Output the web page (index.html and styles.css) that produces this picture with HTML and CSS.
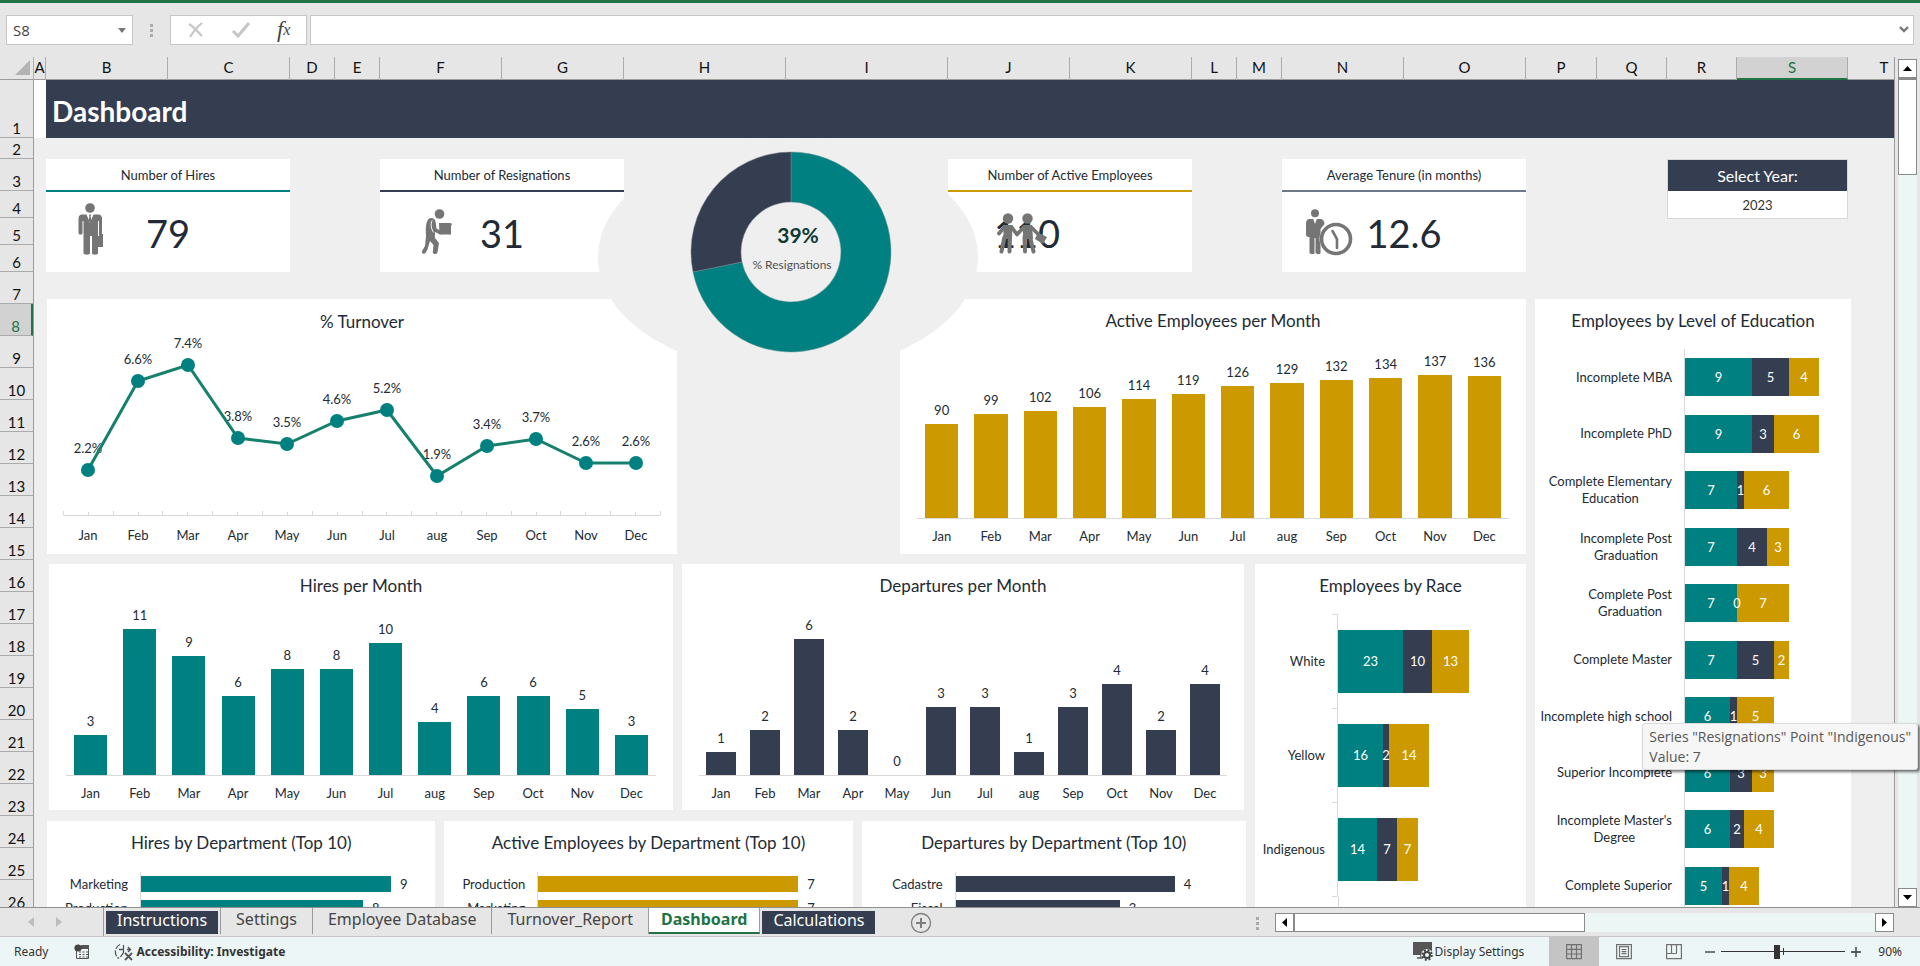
FILE: index.html
```html
<!DOCTYPE html>
<html lang="en">
<head>
<meta charset="utf-8">
<title>Dashboard</title>
<link rel="stylesheet" href="styles.css">
</head>
<body>
<header class="formula">
  <div class="namebox">
    <input type="text" value="S8" aria-label="Name box">
    <button type="button" aria-label="Open name list"><svg width="8" height="5" viewBox="0 0 8 5"><path d="M0 0h8L4 5z" fill="#777"/></svg></button>
  </div>
  <span class="grip"></span>
  <div class="fx">
    <button type="button" aria-label="Cancel"><svg width="18" height="18" viewBox="0 0 18 18"><path d="M2 3c5 3 9 8 13 12M15 2C10 6 6 11 3 16" fill="none" stroke="#c6c6c6" stroke-width="2.2"/></svg></button>
    <button type="button" aria-label="Enter"><svg width="18" height="18" viewBox="0 0 18 18"><path d="M1 10l5 5L17 2" fill="none" stroke="#c6c6c6" stroke-width="3"/></svg></button>
    <button type="button" class="fn" aria-label="Insert function">f<sub>x</sub></button>
  </div>
  <div class="entry">
    <input type="text" aria-label="Formula bar">
    <button type="button" aria-label="Expand formula bar"><svg width="10" height="8" viewBox="0 0 10 8"><path d="M1 1l4 4 4-4" fill="none" stroke="#777" stroke-width="2.4"/></svg></button>
  </div>
</header>

<main class="workbook">
  <div class="corner"><svg width="15" height="15" viewBox="0 0 15 15"><path d="M15 0v15H0z" fill="#b4b4b4"/></svg></div>
  <div class="cols"><span>A</span><span>B</span><span>C</span><span>D</span><span>E</span><span>F</span><span>G</span><span>H</span><span>I</span><span>J</span><span>K</span><span>L</span><span>M</span><span>N</span><span>O</span><span>P</span><span>Q</span><span>R</span><span class="on">S</span><span class="last">T</span></div>
  <div class="vscroll">
    <button type="button" aria-label="Scroll up"><svg width="9" height="5" viewBox="0 0 9 5"><path d="M0 5L4.500 0 9 5z"/></svg></button>
    <div class="vtrack"><div class="vthumb"></div></div>
    <button type="button" aria-label="Scroll down"><svg width="9" height="5" viewBox="0 0 9 5"><path d="M0 0L4.500 5 9 0z"/></svg></button>
  </div>
  <div class="rows"><span>1</span><span>2</span><span>3</span><span>4</span><span>5</span><span>6</span><span>7</span><span class="on">8</span><span>9</span><span>10</span><span>11</span><span>12</span><span>13</span><span>14</span><span>15</span><span>16</span><span>17</span><span>18</span><span>19</span><span>20</span><span>21</span><span>22</span><span>23</span><span>24</span><span>25</span><span>26</span></div>

  <div class="sheet">
    <div class="band"><h1>Dashboard</h1></div>

    <div class="kpis">
      <section class="kpi k1">
        <h2>Number of Hires</h2>
        <div class="body">
          <svg class="ic" width="26" height="52" viewBox="0 0 26 52" fill="#757575"><circle cx="12" cy="5" r="4.800"/><path d="M4 11.500h4.500L12 20l3.500-8.500H20c2.500 0 4 1.500 4 4V31h1v13h-5V33h1V18h-1v32.500c0 1.500-6 1.500-6 0V33h-2v17.500c0 1.500-6.500 1.500-6.500 0V18h-1v12c0 2-4 2-4 0V15.500c0-2.500 1.500-4 3.500-4z"/><path d="M11 11.500h2l-.4 2 .9 4L12 20l-1.500-2.500.9-4z"/></svg>
          <strong>79</strong>
        </div>
      </section>
      <section class="kpi k2">
        <h2>Number of Resignations</h2>
        <div class="body">
          <svg class="ic" width="30" height="46" viewBox="0 0 30 46" fill="#757575"><circle cx="17.500" cy="5" r="4.800"/><path d="M17 14h11.500l1.500 1-1 2v8.500H17.500z"/><path d="M7 9.500c3-1.500 6 0 6.500 3l1 7 4.500 2.500c2 1.500.8 4-1.500 3.200L13 23c0 3-.4 4.500 0 6l4 5-1.500 9.500c-.8 2.500-5 2-4.700-.8L11.500 36 8 32 5.500 40.500 3.500 44C1.500 46-1 44 .3 41.500L3 37l1-10c-.5-7-.3-14.500 3-17.500z"/><path d="M10.200 11.500c-2 3-1 9 1.500 12" fill="none" stroke="#fff" stroke-width="1"/></svg>
          <strong>31</strong>
        </div>
      </section>
      <div class="ring">
        <svg width="380" height="232" viewBox="0 0 380 232">
          <ellipse cx="190" cy="116" rx="190" ry="116" fill="#efefef"/>
          <path d="M193 11A100 100 0 1 1 95 131L144 121A50 50 0 1 0 193 61z" fill="#008080" stroke="#60908f" stroke-width=".5"/>
          <path d="M193 11A100 100 0 0 0 95 131L144 121A50 50 0 0 1 193 61z" fill="#343e50" stroke="#7a8593" stroke-width=".5"/>
          <text class="pct" x="200" y="102">39%</text>
          <text class="cap" x="194" y="128">% Resignations</text>
        </svg>
      </div>
      <section class="kpi k3">
        <h2>Number of Active Employees</h2>
        <div class="body">
          <strong>110</strong>
          <svg class="ic" width="52" height="42" viewBox="0 0 52 42" fill="#757575"><circle cx="12" cy="5.500" r="5.200"/><circle cx="31.500" cy="5.500" r="5.200"/><g fill="none" stroke="#757575" stroke-linecap="round" stroke-linejoin="round"><path d="M8.500 14L3 20.500M15.500 14l5.500 7.500 7-7.500M35 14l8 8" stroke-width="3.800"/><path d="M8.500 24L5.500 38.500M14 24l-.5 14.500M28.500 24l.5 14.500M34 24l3.500 14.500" stroke-width="4"/></g><path d="M7.500 12h9l-.5 14H7.500zM27 12h9l1 14H27z"/><path d="M42 19.500l9 4.500-4 7-8-5z"/></svg>
        </div>
      </section>
      <section class="kpi k4">
        <h2>Average Tenure (in months)</h2>
        <div class="body">
          <svg class="ic" width="47" height="47" viewBox="0 0 47 47" fill="#757575"><circle cx="9" cy="4.300" r="4"/><path d="M3.500 10h3.700l1.800 5 1.800-5h3.700c2.500 0 4 2.500 4 5l-4 5v24c0 1.600-5 1.600-5 0V29h-1v15c0 1.600-5 1.600-5 0V28H2.500C1 28 0 27 0 25.500V15c0-3 1-5 3.500-5z"/><circle cx="30" cy="30" r="16.500" fill="#fff"/><circle cx="30" cy="30" r="14.500" fill="none" stroke="#757575" stroke-width="3.600"/><path d="M26.500 22l4.500 8v9" fill="none" stroke="#757575" stroke-width="2.600" stroke-linecap="round"/></svg>
          <strong>12.6</strong>
        </div>
      </section>
      <div class="year">
        <label for="year">Select Year:</label>
        <select id="year"><option>2023</option></select>
      </div>
    </div>

    <div class="charts">
      <div class="left">
        <div class="top">
          <section class="panel turnover">
            <svg viewBox="0 0 630 255" role="img" aria-label="Turnover by month">
              <text class="ttl" x="315" y="29">% Turnover</text>
              <path d="M16.500 216.500h597M16.500 212v4M41.500 213v3M66.500 212v4M91.500 213v3M115.500 212v4M140.500 213v3M165.500 212v4M190.500 213v3M215.500 212v4M240.500 213v3M265.500 212v4M290.500 213v3M315.500 212v4M339.500 213v3M364.500 212v4M389.500 213v3M414.500 212v4M439.500 213v3M464.500 212v4M489.500 213v3M513.500 212v4M538.500 213v3M563.500 212v4M588.500 213v3M613.500 212v4" fill="none" stroke="#d9d9d9"/>
              <g class="lbl">
                <text x="41" y="154">2.2%</text><text x="91" y="65">6.6%</text><text x="141" y="49">7.4%</text><text x="191" y="122">3.8%</text><text x="240" y="128">3.5%</text><text x="290" y="105">4.6%</text><text x="340" y="94">5.2%</text><text x="390" y="160">1.9%</text><text x="440" y="130">3.4%</text><text x="489" y="123">3.7%</text><text x="539" y="147">2.6%</text><text x="589" y="147">2.6%</text>
              </g>
              <polyline points="41,171 91,82 141,66 191,139 240,145 290,122 340,111 390,177 440,147 489,140 539,164 589,164" fill="none" stroke="#15806c" stroke-width="3"/>
              <g fill="#008080"><circle cx="41" cy="171" r="7"/><circle cx="91" cy="82" r="7"/><circle cx="141" cy="66" r="7"/><circle cx="191" cy="139" r="7"/><circle cx="240" cy="145" r="7"/><circle cx="290" cy="122" r="7"/><circle cx="340" cy="111" r="7"/><circle cx="390" cy="177" r="7"/><circle cx="440" cy="147" r="7"/><circle cx="489" cy="140" r="7"/><circle cx="539" cy="164" r="7"/><circle cx="589" cy="164" r="7"/></g>
              <g class="lbl">
                <text x="41" y="241">Jan</text><text x="91" y="241">Feb</text><text x="141" y="241">Mar</text><text x="191" y="241">Apr</text><text x="240" y="241">May</text><text x="290" y="241">Jun</text><text x="340" y="241">Jul</text><text x="390" y="241">aug</text><text x="440" y="241">Sep</text><text x="489" y="241">Oct</text><text x="539" y="241">Nov</text><text x="589" y="241">Dec</text>
              </g>
            </svg>
          </section>
          <div></div>
          <section class="panel active">
            <h3>Active Employees per Month</h3>
            <ul class="bars">
              <li style="height:94px"><span>90</span><i></i></li><li style="height:104px"><span>99</span><i></i></li><li style="height:107px"><span>102</span><i></i></li><li style="height:111px"><span>106</span><i></i></li><li style="height:119px"><span>114</span><i></i></li><li style="height:124px"><span>119</span><i></i></li><li style="height:132px"><span>126</span><i></i></li><li style="height:135px"><span>129</span><i></i></li><li style="height:138px"><span>132</span><i></i></li><li style="height:140px"><span>134</span><i></i></li><li style="height:143px"><span>137</span><i></i></li><li style="height:142px"><span>136</span><i></i></li>
            </ul>
            <ul class="months"><li>Jan</li><li>Feb</li><li>Mar</li><li>Apr</li><li>May</li><li>Jun</li><li>Jul</li><li>aug</li><li>Sep</li><li>Oct</li><li>Nov</li><li>Dec</li></ul>
          </section>
        </div>

        <div class="bottom">
          <div class="stackcol">
            <div class="mid">
              <section class="panel hires">
                <h3>Hires per Month</h3>
                <ul class="bars">
                  <li style="height:40px"><span>3</span><i></i></li><li style="height:146px"><span>11</span><i></i></li><li style="height:119px"><span>9</span><i></i></li><li style="height:79px"><span>6</span><i></i></li><li style="height:106px"><span>8</span><i></i></li><li style="height:106px"><span>8</span><i></i></li><li style="height:132px"><span>10</span><i></i></li><li style="height:53px"><span>4</span><i></i></li><li style="height:79px"><span>6</span><i></i></li><li style="height:79px"><span>6</span><i></i></li><li style="height:66px"><span>5</span><i></i></li><li style="height:40px"><span>3</span><i></i></li>
                </ul>
                <ul class="months"><li>Jan</li><li>Feb</li><li>Mar</li><li>Apr</li><li>May</li><li>Jun</li><li>Jul</li><li>aug</li><li>Sep</li><li>Oct</li><li>Nov</li><li>Dec</li></ul>
              </section>
              <section class="panel departures">
                <h3>Departures per Month</h3>
                <ul class="bars">
                  <li style="height:23px"><span>1</span><i></i></li><li style="height:45px"><span>2</span><i></i></li><li style="height:136px"><span>6</span><i></i></li><li style="height:45px"><span>2</span><i></i></li><li style="height:0"><span>0</span><i></i></li><li style="height:68px"><span>3</span><i></i></li><li style="height:68px"><span>3</span><i></i></li><li style="height:23px"><span>1</span><i></i></li><li style="height:68px"><span>3</span><i></i></li><li style="height:91px"><span>4</span><i></i></li><li style="height:45px"><span>2</span><i></i></li><li style="height:91px"><span>4</span><i></i></li>
                </ul>
                <ul class="months"><li>Jan</li><li>Feb</li><li>Mar</li><li>Apr</li><li>May</li><li>Jun</li><li>Jul</li><li>aug</li><li>Sep</li><li>Oct</li><li>Nov</li><li>Dec</li></ul>
              </section>
            </div>
            <div class="depts">
              <section class="panel dept d1">
                <h3>Hires by Department (Top 10)</h3>
                <ul class="hbars">
                  <li><span>Marketing</span><div><i style="width:250px"></i>9</div></li>
                  <li><span>Production</span><div><i style="width:222px"></i>8</div></li>
                </ul>
              </section>
              <section class="panel dept d2">
                <h3>Active Employees by Department (Top 10)</h3>
                <ul class="hbars">
                  <li><span>Production</span><div><i style="width:260px"></i>7</div></li>
                  <li><span>Marketing</span><div><i style="width:260px"></i>7</div></li>
                </ul>
              </section>
              <section class="panel dept d3">
                <h3>Departures by Department (Top 10)</h3>
                <ul class="hbars">
                  <li><span>Cadastre</span><div><i style="width:219px"></i>4</div></li>
                  <li><span>Fiscal</span><div><i style="width:164px"></i>3</div></li>
                </ul>
              </section>
            </div>
          </div>
          <section class="panel race">
            <h3>Employees by Race</h3>
            <ul class="stacks">
              <li><span>White</span><div><i style="width:65px">23</i><i style="width:29px">10</i><i style="width:37px">13</i></div></li>
              <li><span>Yellow</span><div><i style="width:45px">16</i><i style="width:6px">2</i><i style="width:40px">14</i></div></li>
              <li><span>Indigenous</span><div><i style="width:39px">14</i><i style="width:20px">7</i><i style="width:21px">7</i></div></li>
            </ul>
          </section>
        </div>
      </div>

      <section class="panel edu">
        <h3>Employees by Level of Education</h3>
        <ul class="stacks">
          <li><span>Incomplete MBA</span><div><i style="width:67px">9</i><i style="width:37px">5</i><i style="width:30px">4</i></div></li>
          <li><span>Incomplete PhD</span><div><i style="width:67px">9</i><i style="width:22px">3</i><i style="width:45px">6</i></div></li>
          <li><span>Complete Elementary<br>Education</span><div><i style="width:52px">7</i><i style="width:7px">1</i><i style="width:45px">6</i></div></li>
          <li><span>Incomplete Post<br>Graduation</span><div><i style="width:52px">7</i><i style="width:30px">4</i><i style="width:22px">3</i></div></li>
          <li><span>Complete Post<br>Graduation</span><div><i style="width:52px">7</i><i style="width:0">0</i><i style="width:52px">7</i></div></li>
          <li><span>Complete Master</span><div><i style="width:52px">7</i><i style="width:37px">5</i><i style="width:15px">2</i></div></li>
          <li><span>Incomplete high school</span><div><i style="width:45px">6</i><i style="width:7px">1</i><i style="width:37px">5</i></div></li>
          <li><span>Superior Incomplete</span><div><i style="width:45px">6</i><i style="width:22px">3</i><i style="width:22px">3</i></div></li>
          <li><span>Incomplete Master's<br>Degree</span><div><i style="width:45px">6</i><i style="width:14px">2</i><i style="width:30px">4</i></div></li>
          <li><span>Complete Superior</span><div><i style="width:37px">5</i><i style="width:7px">1</i><i style="width:30px">4</i></div></li>
        </ul>
      </section>
    </div>
  </div>
  <div class="tip" role="tooltip">Series "Resignations" Point "Indigenous"<br>Value: 7</div>
</main>

<nav class="tabs">
  <div class="arrows">
    <button type="button" aria-label="Previous sheet"><svg width="6" height="10" viewBox="0 0 6 10"><path d="M6 0v10L0 5z" fill="#bdbdbd"/></svg></button>
    <button type="button" aria-label="Next sheet"><svg width="6" height="10" viewBox="0 0 6 10"><path d="M0 0v10l6-5z" fill="#bdbdbd"/></svg></button>
  </div>
  <button type="button" class="tab dark">Instructions</button>
  <button type="button" class="tab first">Settings</button>
  <button type="button" class="tab">Employee Database</button>
  <button type="button" class="tab">Turnover_Report</button>
  <button type="button" class="tab current">Dashboard</button>
  <button type="button" class="tab dark">Calculations</button>
  <button type="button" class="add" aria-label="New sheet"><svg width="22" height="22" viewBox="0 0 22 22" fill="none" stroke="#7d7d7d"><circle cx="11" cy="11" r="9.500" stroke-width="1.300"/><path d="M11 6v10M6 11h10" stroke-width="2"/></svg></button>
  <span class="grip"></span>
  <div class="hscroll">
    <button type="button" aria-label="Scroll left"><svg width="5" height="9" viewBox="0 0 5 9"><path d="M5 0v9L0 4.500z"/></svg></button>
    <div class="htrack"><div class="hthumb"></div></div>
    <button type="button" aria-label="Scroll right"><svg width="5" height="9" viewBox="0 0 5 9"><path d="M0 0v9l5-4.500z"/></svg></button>
  </div>
</nav>

<footer class="status">
  <span class="ready">Ready</span>
  <button type="button" class="macro" aria-label="Record macro"><svg width="16" height="16" viewBox="0 0 16 16"><path d="M2.500 7v7.500h12v-13H7" fill="none" stroke="#555"/><path d="M7 1h8v4H7z" fill="#555"/><circle cx="4" cy="4" r="3.600" fill="#444"/><path d="M5 8h2M8.500 8h2M12 8h2M5 10.500h2M8.500 10.500h2M12 10.500h2M5 13h2M8.500 13h2M12 13h2" stroke="#555" stroke-width="1.200"/></svg></button>
  <button type="button" class="access"><svg width="20" height="18" viewBox="0 0 20 18" fill="none" stroke="#555" stroke-width="1.300"><path d="M6 1.500A8 8 0 0 0 5 15.500" stroke-dasharray="6 1.500"/><path d="M9.500 2v4M5 6.500h5M9.500 6.500v3l-3 4.500M13 6.500h3M14 4l2.500 2.500L14 9"/><path d="M11 10l7 7M18 10l-7 7" stroke-width="1.800"/></svg>Accessibility: Investigate</button>
  <button type="button" class="display"><svg width="20" height="19" viewBox="0 0 20 19"><path d="M0 0h19v13H0z" fill="#555"/><path d="M4 16h6M8 13v3" stroke="#555" stroke-width="1.500"/><circle cx="14" cy="13" r="6" fill="#edf6f6"/><circle cx="14" cy="13" r="3" fill="none" stroke="#444" stroke-width="2"/><circle cx="14" cy="13" r="4.800" fill="none" stroke="#444" stroke-width="2" stroke-dasharray="2 1.770"/></svg>Display Settings</button>
  <button type="button" class="view on" aria-label="Normal"><svg width="16" height="17" viewBox="0 0 16 17" fill="none" stroke="#707070" stroke-width="1.200"><path d="M.600 1.600h14.800v14H.600zM5.500 1.600v14M10.500 1.600v14M.600 6.300h14.800M.600 11h14.800"/></svg></button>
  <button type="button" class="view" aria-label="Page layout"><svg width="16" height="17" viewBox="0 0 16 17" fill="none" stroke="#707070" stroke-width="1.200"><path d="M.600 1.600h14.800v14H.600zM3.500 3.600h9v10h-9zM5.500 6.500h5M5.500 8.600h5M5.500 10.700h5"/></svg></button>
  <button type="button" class="view" aria-label="Page break preview"><svg width="16" height="17" viewBox="0 0 16 17" fill="none" stroke="#707070" stroke-width="1.200"><path d="M.600 1.600h14.800v14H.600zM.600 10.500h10M5.500 1.600v9M10.500 1.600v9"/></svg></button>
  <button type="button" class="zoombtn" aria-label="Zoom out"><svg width="10" height="10" viewBox="0 0 10 10"><path d="M0 5h10" stroke="#333" stroke-width="1.300"/></svg></button>
  <input type="range" class="zoom" min="10" max="190" value="90" aria-label="Zoom">
  <button type="button" class="zoombtn" aria-label="Zoom in"><svg width="10" height="10" viewBox="0 0 10 10"><path d="M0 5h10M5 0v10" stroke="#333" stroke-width="1.300"/></svg></button>
  <span class="level">90%</span>
</footer>
</body>
</html>
```
FILE: styles.css
```css
:root {
  --teal: #008080;
  --navy: #343e50;
  --gold: #cc9900;
  --ink: #222b35;
  --chrome: #e6e6e6;
  --mint: #edf6f6;
  --rule: #d9d9d9;
  --cols: 12fr 122fr 122fr 45fr 45fr 122fr 122fr 162fr 162fr 122fr 122fr 45fr 45fr 122fr 122fr 71fr 70fr 70fr 111fr 46fr;
}
* { box-sizing: border-box; }
body {
  margin: 0;
  height: 100vh;
  display: flex;
  flex-direction: column;
  overflow: hidden;
  background: var(--chrome);
  color: var(--ink);
  font: 13px/18px Lato, "Open Sans", sans-serif;
}
h1, h2, h3, ul { margin: 0; padding: 0; font-weight: 400; }
ul { list-style: none; }
i { font-style: normal; }
button, input, select { font: inherit; color: inherit; border: 0; padding: 0; margin: 0; background: none; }
button { display: flex; align-items: center; justify-content: center; }
svg { display: block; flex: none; }

/* formula bar */
.formula {
  flex: none;
  display: flex;
  align-items: center;
  height: 57px;
  padding: 0 6px;
  border-top: 3px solid #217346;
  font: 15px/20px "Open Sans", sans-serif;
  color: #444;
}
.namebox, .fx, .entry { height: 30px; display: flex; align-items: center; background: #fff; border: 1px solid #c6c6c6; }
.namebox { width: 127px; padding: 0 6px; }
.namebox input { flex: 1; min-width: 0; }
.grip { width: 3px; height: 13px; margin: 0 17px; background: repeating-linear-gradient(#ababab 0 3px, transparent 3px 5px); }
.fx { width: 137px; justify-content: space-around; padding: 0 2px; }
.fx .fn { font: italic 23px/26px "Liberation Serif", serif; color: #444; }
.fn sub { font-size: 16px; line-height: 10px; }
.entry { flex: 1; margin-left: 3px; padding-right: 4px; }
.entry input { flex: 1; min-width: 0; height: 26px; padding: 0 6px; }

/* worksheet frame */
.workbook {
  flex: 1;
  min-height: 0;
  position: relative;
  display: grid;
  grid-template-columns: 34px minmax(0, 1fr) 26px;
  grid-template-rows: 23px minmax(0, 1fr);
  border-bottom: 1px solid #8f8f8f;
}
.corner { display: flex; justify-content: flex-end; align-items: flex-end; padding: 0 3px 4px 0; border-right: 1px solid #b0b0b0; border-bottom: 1px solid #9b9b9b; }
.cols { display: grid; grid-template-columns: var(--cols); border-bottom: 1px solid #9b9b9b; font-size: 15px; line-height: 21px; color: #111; text-align: center; }
.cols span { min-width: 0; border-right: 1px solid #ababab; }
.cols .on { background: #d2d2d2; color: #217346; border-bottom: 2px solid #217346; }
.cols .last { border-right: 0; padding-left: 26px; }
.rows { grid-column: 1; grid-row: 2; overflow: hidden; border-right: 1px solid #9b9b9b; font-size: 15px; color: #111; text-align: center; }
.rows span { display: flex; align-items: flex-end; justify-content: center; height: 32px; border-bottom: 1px solid #ababab; }
.rows span:nth-child(1) { height: 58px; }
.rows span:nth-child(2) { height: 21px; }
.rows span:nth-child(n+4):nth-child(-n+6) { height: 27px; }
.rows .on { background: #d2d2d2; color: #217346; border-right: 2px solid #217346; }
.vscroll { grid-column: 3; grid-row: 1 / 3; display: flex; flex-direction: column; align-items: center; padding-top: 2px; border-left: 1px solid #9b9b9b; }
.vscroll button, .hscroll button { width: 19px; height: 19px; background: #fff; border: 1px solid #8a8a8a; }
.vtrack { flex: 1; width: 19px; background: #ebf6f5; }
.vthumb { height: 97px; background: #fff; border: 1px solid #8a8a8a; border-top-width: 2px; }

.sheet { grid-column: 2; grid-row: 2; overflow: hidden; display: flex; flex-direction: column; background: #efefef; }
.band { flex: none; display: flex; align-items: center; height: 58px; margin-left: 12px; padding: 3px 6px 0; background: var(--navy); color: #fff; box-shadow: -12px 0 0 #fff; }
.band h1 { font-size: 28px; line-height: 32px; font-weight: 700; }

/* key figures */
.kpis { flex: none; display: grid; grid-template-columns: var(--cols); margin-top: 21px; height: 113px; }
.kpi { display: flex; flex-direction: column; background: #fff; }
.kpi h2 { height: 33px; padding-top: 7px; border-bottom: 2px solid; font-size: 13px; line-height: 18px; text-align: center; }
.k1 { grid-column: 2 / 4; }
.k2 { grid-column: 6 / 8; }
.k3 { grid-column: 10 / 12; }
.k4 { grid-column: 14 / 16; }
.k1 h2 { border-color: var(--teal); }
.k2 h2 { border-color: var(--navy); }
.k3 h2 { border-color: var(--gold); }
.k4 h2 { border-color: #6f7888; }
.body { flex: 1; display: grid; align-items: center; }
.body > * { grid-area: 1 / 1; }
.body strong { justify-self: center; font-size: 38px; line-height: 44px; font-weight: 400; padding-top: 2px; }
.k3 .body strong { margin-right: 86px; }
.k1 .ic { margin: 0 0 6px 32px; }
.k2 .ic { margin-left: 42px; }
.k3 .ic { margin: 4px 0 0 48px; }
.k4 .ic { margin: 0 0 0 24px; }
.ring { grid-column: 8 / 10; position: relative; z-index: 2; }
.ring svg { position: absolute; top: -18px; left: calc(50% - 188px); }
.ring text { text-anchor: middle; }
.pct { font-size: 21px; font-weight: 700; fill: #0d3b33; }
.cap { font-size: 12px; fill: #505050; }
.year { grid-column: 18 / 20; align-self: start; display: flex; flex-direction: column; border: 1px solid #d5d8dc; }
.year label { height: 31px; background: var(--navy); color: #fff; font-size: 16px; line-height: 31px; text-align: center; }
.year select { height: 27px; appearance: none; background: #fff; color: #333; font-size: 13px; font-weight: 400; text-align-last: center; }

/* charts */
.charts { flex: 1; min-height: 0; display: grid; grid-template-columns: 1479fr 316fr; gap: 9px; margin: 27px 43px 0 13px; }
.left { display: grid; grid-template-rows: 255px minmax(0, 1fr); gap: 10px; min-height: 0; }
.top { display: grid; grid-template-columns: 630fr 223fr 626fr; }
.bottom { display: grid; grid-template-columns: 1199fr 271fr; gap: 9px; min-height: 0; }
.stackcol { display: grid; grid-template-rows: 246px minmax(0, 1fr); gap: 11px; min-height: 0; }
.mid { display: grid; grid-template-columns: 624fr 562fr; gap: 9px; padding: 0 2px; }
.depts { display: grid; grid-template-columns: 388fr 408fr 384fr; gap: 9px; min-height: 0; }
.panel { display: flex; flex-direction: column; min-width: 0; min-height: 0; padding: 11px 17px 8px; background: #fff; }
.panel h3, .ttl { font-size: 17px; line-height: 22px; text-align: center; white-space: nowrap; }
.panel.turnover { padding: 0; }
.turnover svg { width: 100%; }
.turnover text { fill: var(--ink); text-anchor: middle; }
.lbl { font-size: 13px; }
.bars, .months { display: grid; grid-template-columns: repeat(12, minmax(0, 1fr)); text-align: center; }
.bars { flex: 1; align-items: end; border-bottom: 1px solid var(--rule); }
.bars li { display: flex; flex-direction: column; align-items: center; }
.bars span { margin-top: -23px; height: 23px; }
.bars i { flex: 1; width: 67%; }
.months { padding-top: 8px; }
.panel.active { padding-bottom: 9px; }
.active .bars i { background: var(--gold); }
.hires .bars i { background: var(--teal); }
.departures .bars i { background: var(--navy); }

.stacks, .hbars { flex: 1; display: flex; flex-direction: column; margin-top: 17px; min-height: 0; }
.stacks li, .hbars li { flex: none; display: grid; grid-template-columns: var(--axis) 1fr; }
.stacks li > span, .hbars li > span { align-self: center; justify-self: end; text-align: center; line-height: 17px; padding-right: 12px; white-space: nowrap; }
.stacks div, .hbars div { display: flex; align-items: center; border-left: 1px solid var(--rule); }
.stacks i { display: flex; align-items: center; justify-content: center; color: #fff; background: var(--teal); }
.stacks i:nth-child(2) { background: var(--navy); z-index: 1; }
.stacks i:nth-child(3) { background: var(--gold); }
.panel.race, .panel.edu, .panel.dept { padding: 11px 0 0; }
.race { --axis: 82px; }
.race .stacks li { height: 94px; background: linear-gradient(var(--rule), var(--rule)) no-repeat 77px 0 / 5px 1px; }
.race .stacks i { height: 63px; }
.race .stacks::after {
  content: "";
  flex: 1;
  width: 83px;
  border-right: 1px solid var(--rule);
  background: linear-gradient(var(--rule), var(--rule)) no-repeat 77px 0 / 5px 1px;
}
.edu { --axis: 149px; }
.edu .stacks { flex: none; height: 565px; }
.edu .stacks li { flex: 1; }
.edu .stacks i { height: 38px; }

.dept { --axis: 93px; }
.dept .hbars { margin-top: 18px; }
.hbars li { height: 24px; }
.hbars i { height: 16px; margin-right: 9px; }
.d1 i { background: var(--teal); }
.d2 i { background: var(--gold); }
.d3 i { background: var(--navy); }

.tip {
  position: absolute;
  top: 666px;
  right: 2px;
  z-index: 5;
  padding: 3px 6px 2px;
  background: #f6f6f6;
  border: 1px solid #dcdcdc;
  border-radius: 3px;
  box-shadow: 2px 2px 3px rgba(0, 0, 0, .55);
  color: #575757;
  font: 14px/20px "Open Sans", sans-serif;
  white-space: nowrap;
}

/* sheet tabs */
.tabs { flex: none; display: flex; align-items: flex-start; height: 29px; padding-right: 26px; border-bottom: 1px solid #c6c6c6; font: 16px/20px "Noto Sans", sans-serif; color: #444; }
.arrows { display: flex; gap: 22px; width: 104px; height: 28px; padding-left: 28px; align-items: center; border-right: 1px solid #9b9b9b; }
.tab { height: 26px; padding: 0 15px 5px; border-right: 1px solid #9b9b9b; }
.tab.first { border-left: 1px solid #9b9b9b; }
.tab.dark { height: 23px; margin: 3px 2px 0; padding: 0 11px 6px; background: var(--navy); color: #fff; border: 0; }
.tab.current { background: #fff; color: #217346; font-weight: 700; border-bottom: 2px solid #217346; padding: 0 12px 3px; }
.add { margin: 4px 0 0 33px; }
.tabs .grip { margin: 9px 16px 0 auto; }
.hscroll { display: flex; width: 619px; padding-top: 5px; }
.htrack { flex: 1; background: #ebf6f5; }
.hthumb { width: 50%; height: 19px; background: #fff; border: 1px solid #8a8a8a; }

/* status bar */
.status { flex: none; display: flex; align-items: center; height: 29px; padding: 0 18px 0 14px; background: var(--mint); font: 12px/18px "Noto Sans", sans-serif; color: #333; }
.macro { margin-left: 26px; }
.access { margin-left: 24px; gap: 2px; font-weight: 700; }
.display { margin: 0 25px 0 auto; gap: 2px; }
.view { width: 50px; height: 29px; }
.view.on { background: #c4c4c4; }
.zoombtn { width: 10px; margin-left: 6px; }
.zoom { appearance: none; width: 124px; height: 14px; margin: 0 0 0 6px; background: linear-gradient(#333, #333) no-repeat center / 100% 1px, linear-gradient(#333, #333) no-repeat center / 1px 7px; }
.zoom::-webkit-slider-thumb { appearance: none; width: 6px; height: 14px; background: #333; }
.level { margin-left: 17px; }
```
